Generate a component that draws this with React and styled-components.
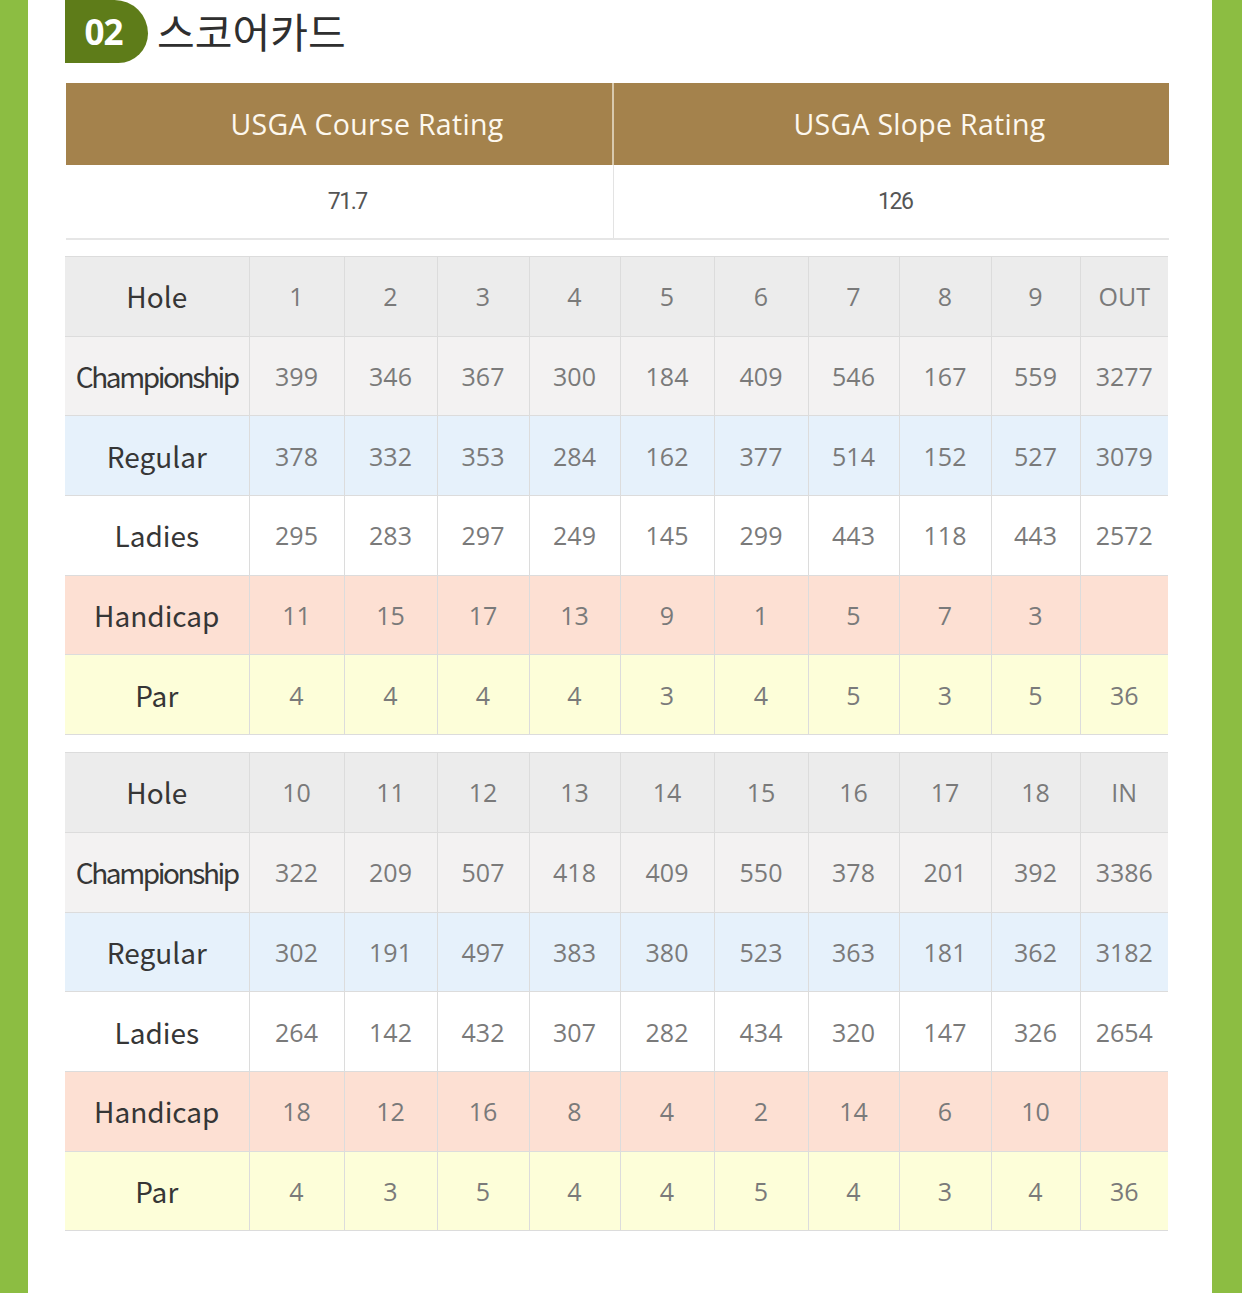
import React from 'react';
import styled, { createGlobalStyle } from 'styled-components';

const GlobalStyle = createGlobalStyle`
    html, body { margin: 0; padding: 0; }
    body {
        background: #ffffff;
        font-family: 'Noto Sans CJK KR', 'Noto Sans', sans-serif;
    }
`;

const front = {
    holes: ['1', '2', '3', '4', '5', '6', '7', '8', '9', 'OUT'],
    rows: [
        { key: 'champ', title: 'Championship', values: ['399', '346', '367', '300', '184', '409', '546', '167', '559', '3277'] },
        { key: 'regular', title: 'Regular', values: ['378', '332', '353', '284', '162', '377', '514', '152', '527', '3079'] },
        { key: 'ladies', title: 'Ladies', values: ['295', '283', '297', '249', '145', '299', '443', '118', '443', '2572'] },
        { key: 'handicap', title: 'Handicap', values: ['11', '15', '17', '13', '9', '1', '5', '7', '3', ''] },
        { key: 'par', title: 'Par', values: ['4', '4', '4', '4', '3', '4', '5', '3', '5', '36'] },
    ],
};

const back = {
    holes: ['10', '11', '12', '13', '14', '15', '16', '17', '18', 'IN'],
    rows: [
        { key: 'champ', title: 'Championship', values: ['322', '209', '507', '418', '409', '550', '378', '201', '392', '3386'] },
        { key: 'regular', title: 'Regular', values: ['302', '191', '497', '383', '380', '523', '363', '181', '362', '3182'] },
        { key: 'ladies', title: 'Ladies', values: ['264', '142', '432', '307', '282', '434', '320', '147', '326', '2654'] },
        { key: 'handicap', title: 'Handicap', values: ['18', '12', '16', '8', '4', '2', '14', '6', '10', ''] },
        { key: 'par', title: 'Par', values: ['4', '3', '5', '4', '4', '5', '4', '3', '4', '36'] },
    ],
};

const colWidths = [184, 95, 93, 92, 91, 94, 94, 91, 92, 89, 88];

const rowColors = {
    hole: '#ececec',
    champ: '#f3f2f2',
    regular: '#e6f1fb',
    ladies: '#ffffff',
    handicap: '#fde0d3',
    par: '#fdfed9',
};

const ScoreTable = ({ data }) => (
    <Score>
        <colgroup>
            {colWidths.map((w, i) => <Col key={i} $w={w} />)}
        </colgroup>
        <tbody>
            <Row $bg={rowColors.hole}>
                <Label>Hole</Label>
                {data.holes.map(h => <Num key={h}>{h}</Num>)}
            </Row>
            {data.rows.map(row => (
                <Row key={row.key} $bg={rowColors[row.key]}>
                    <Label $narrow={row.key === 'champ'}>{row.title}</Label>
                    {row.values.map((v, i) => <Num key={i}>{v}</Num>)}
                </Row>
            ))}
        </tbody>
    </Score>
);

const App = () => {
    return (
        <>
            <GlobalStyle />
            <Page>
                <Content>
                    <TitleBar>
                        <Badge>02</Badge>
                        <Title>스코어카드</Title>
                    </TitleBar>

                    <Rating>
                        <colgroup>
                            <Col $w={547} />
                            <Col $w={556} />
                        </colgroup>
                        <thead>
                            <tr>
                                <RatingHead>USGA Course Rating</RatingHead>
                                <RatingHead>USGA Slope Rating</RatingHead>
                            </tr>
                        </thead>
                        <tbody>
                            <tr>
                                <RatingValue>71.7</RatingValue>
                                <RatingValue>126</RatingValue>
                            </tr>
                        </tbody>
                    </Rating>

                    <ScoreTable data={front} />
                    <ScoreTable data={back} />
                </Content>
            </Page>
        </>
    );
};

const Page = styled.div`
    width: 1242px;
    min-height: 1293px;
    background: #8cbd42;
    padding: 0 30px 0 28px;
    box-sizing: border-box;
    display: flex;
`;

const Content = styled.div`
    flex: 1;
    background: #ffffff;
    padding: 0 0 60px 37px;
    display: flex;
    flex-direction: column;
    align-items: flex-start;
`;

const TitleBar = styled.div`
    display: flex;
    align-items: center;
    gap: 9px;
    height: 63px;
`;

const Badge = styled.div`
    width: 83px;
    height: 63px;
    background: #5e7c19;
    border-radius: 0 34px 30px 0;
    color: #ffffff;
    font-family: 'Open Sans', 'Noto Sans', sans-serif;
    font-weight: 700;
    font-size: 35px;
    letter-spacing: -1px;
    display: flex;
    align-items: center;
    justify-content: center;
    padding-right: 6px;
    box-sizing: border-box;
`;

const Title = styled.h2`
    margin: 0 0 2px;
    font-family: 'Noto Sans CJK KR', sans-serif;
    font-weight: 400;
    font-size: 41px;
    letter-spacing: 0;
    color: #2f2f2f;
    line-height: 1;
`;

const Rating = styled.table`
    width: 1103px;
    margin: 20px 0 0 1px;
    border-collapse: collapse;
    table-layout: fixed;
    border-bottom: 2px solid #e6e6e6;
`;

const RatingHead = styled.th`
    height: 82px;
    padding: 0 0 0 56px;
    background: #a4824c;
    color: #fdf8ee;
    font-family: 'Open Sans', 'Noto Sans', sans-serif;
    font-weight: 400;
    font-size: 28.5px;
    letter-spacing: 0.3px;
    text-align: center;
    & + & { border-left: 2px solid #d8c9ad; }
`;

const RatingValue = styled.td`
    height: 73px;
    padding: 0 0 0 16px;
    text-align: center;
    color: #555555;
    font-family: 'Liberation Sans Narrow', 'Roboto', sans-serif;
    font-size: 23px;
    letter-spacing: -1.5px;
    & + & { border-left: 1px solid #e3e3e3; padding-left: 8px; }
`;

const Score = styled.table`
    width: 1103px;
    margin-top: 16px;
    border-collapse: collapse;
    table-layout: fixed;
    & + & { margin-top: 17px; }
`;

const Col = styled.col`
    width: ${p => p.$w}px;
`;

const Row = styled.tr`
    height: 79.7px;
    background: ${p => p.$bg};
`;

const Cell = styled.td`
    padding: 0;
    text-align: center;
    border: 1px solid #dcdcdc;
    white-space: nowrap;
    overflow: visible;
    &:first-child { border-left: none; }
    &:last-child { border-right: none; }
`;

const Label = styled(Cell)`
    font-family: 'Noto Sans CJK KR', 'Noto Sans', sans-serif;
    font-size: 28px;
    color: #363636;
    letter-spacing: ${p => (p.$narrow ? '-2.4px' : '0')};
`;

const Num = styled(Cell)`
    font-family: 'Open Sans', 'Noto Sans', sans-serif;
    font-size: 25px;
    color: #7a7a7a;
`;

export default App;
